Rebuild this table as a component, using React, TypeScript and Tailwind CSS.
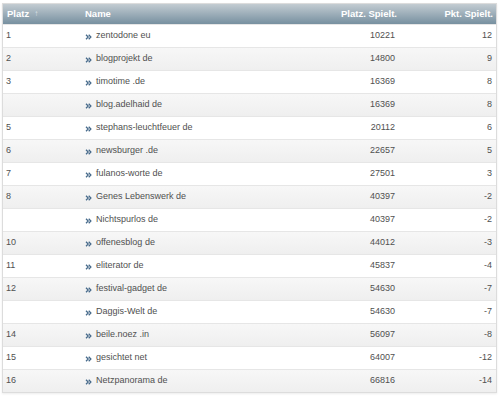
import React from "react";

const rows: [string, string, string, string][] = [
  ["1", "zentodone eu", "10221", "12"],
  ["2", "blogprojekt de", "14800", "9"],
  ["3", "timotime .de", "16369", "8"],
  ["", "blog.adelhaid de", "16369", "8"],
  ["5", "stephans-leuchtfeuer de", "20112", "6"],
  ["6", "newsburger .de", "22657", "5"],
  ["7", "fulanos-worte de", "27501", "3"],
  ["8", "Genes Lebenswerk de", "40397", "-2"],
  ["", "Nichtspurlos de", "40397", "-2"],
  ["10", "offenesblog de", "44012", "-3"],
  ["11", "eliterator de", "45837", "-4"],
  ["12", "festival-gadget de", "54630", "-7"],
  ["", "Daggis-Welt de", "54630", "-7"],
  ["14", "beile.noez .in", "56097", "-8"],
  ["15", "gesichtet net", "64007", "-12"],
  ["16", "Netzpanorama de", "66816", "-14"],
];

function Chevrons() {
  return (
    <svg width="7" height="6" viewBox="0 0 7 6" className="shrink-0 mt-[1px]">
      <path d="M1 0.7 L3.2 3 L1 5.3" fill="none" stroke="#45698a" strokeWidth="1.25" />
      <path d="M3.7 0.7 L5.9 3 L3.7 5.3" fill="none" stroke="#45698a" strokeWidth="1.25" />
    </svg>
  );
}

export default function App() {
  return (
    <div className="w-[500px] h-[400px] bg-white pt-[3px] pl-[2px] pr-[3px] font-['Liberation_Sans',Arial,sans-serif]">
      <div className="border border-[#dcdcdc] shadow-[0_1px_2px_rgba(0,0,0,0.08)]">
        <div className="grid grid-cols-[79px_1fr_130px_98px] h-[20px] items-center bg-gradient-to-b from-[#c3ccd2] to-[#7790a0] text-white font-bold text-[9.5px]">
          <div className="pl-[4px] flex items-center gap-[5px]">
            <span>Platz</span>
            <span className="text-[#d9e0e5] text-[8px] leading-none">↑</span>
          </div>
          <div className="pl-[3px]">Name</div>
          <div className="text-right pr-[1px]">Platz. Spielt.</div>
          <div className="text-right pr-[3px]">Pkt. Spielt.</div>
        </div>
        {rows.map((r, i) => (
          <div
            key={i}
            className={
              "grid grid-cols-[79px_1fr_130px_98px] h-[23px] items-center text-[9px] text-[#505050] border-t border-[#e6e6e6] " +
              (i % 2 === 1 ? "bg-gradient-to-b from-[#f7f7f7] to-[#efefef]" : "bg-white")
            }
          >
            <div className="pl-[3px]">{r[0]}</div>
            <div className="pl-[3px] flex items-center gap-[4px]">
              <Chevrons />
              <span>{r[1]}</span>
            </div>
            <div className="text-right pr-[3px]">{r[2]}</div>
            <div className="text-right pr-[4px]">{r[3]}</div>
          </div>
        ))}
      </div>
    </div>
  );
}
